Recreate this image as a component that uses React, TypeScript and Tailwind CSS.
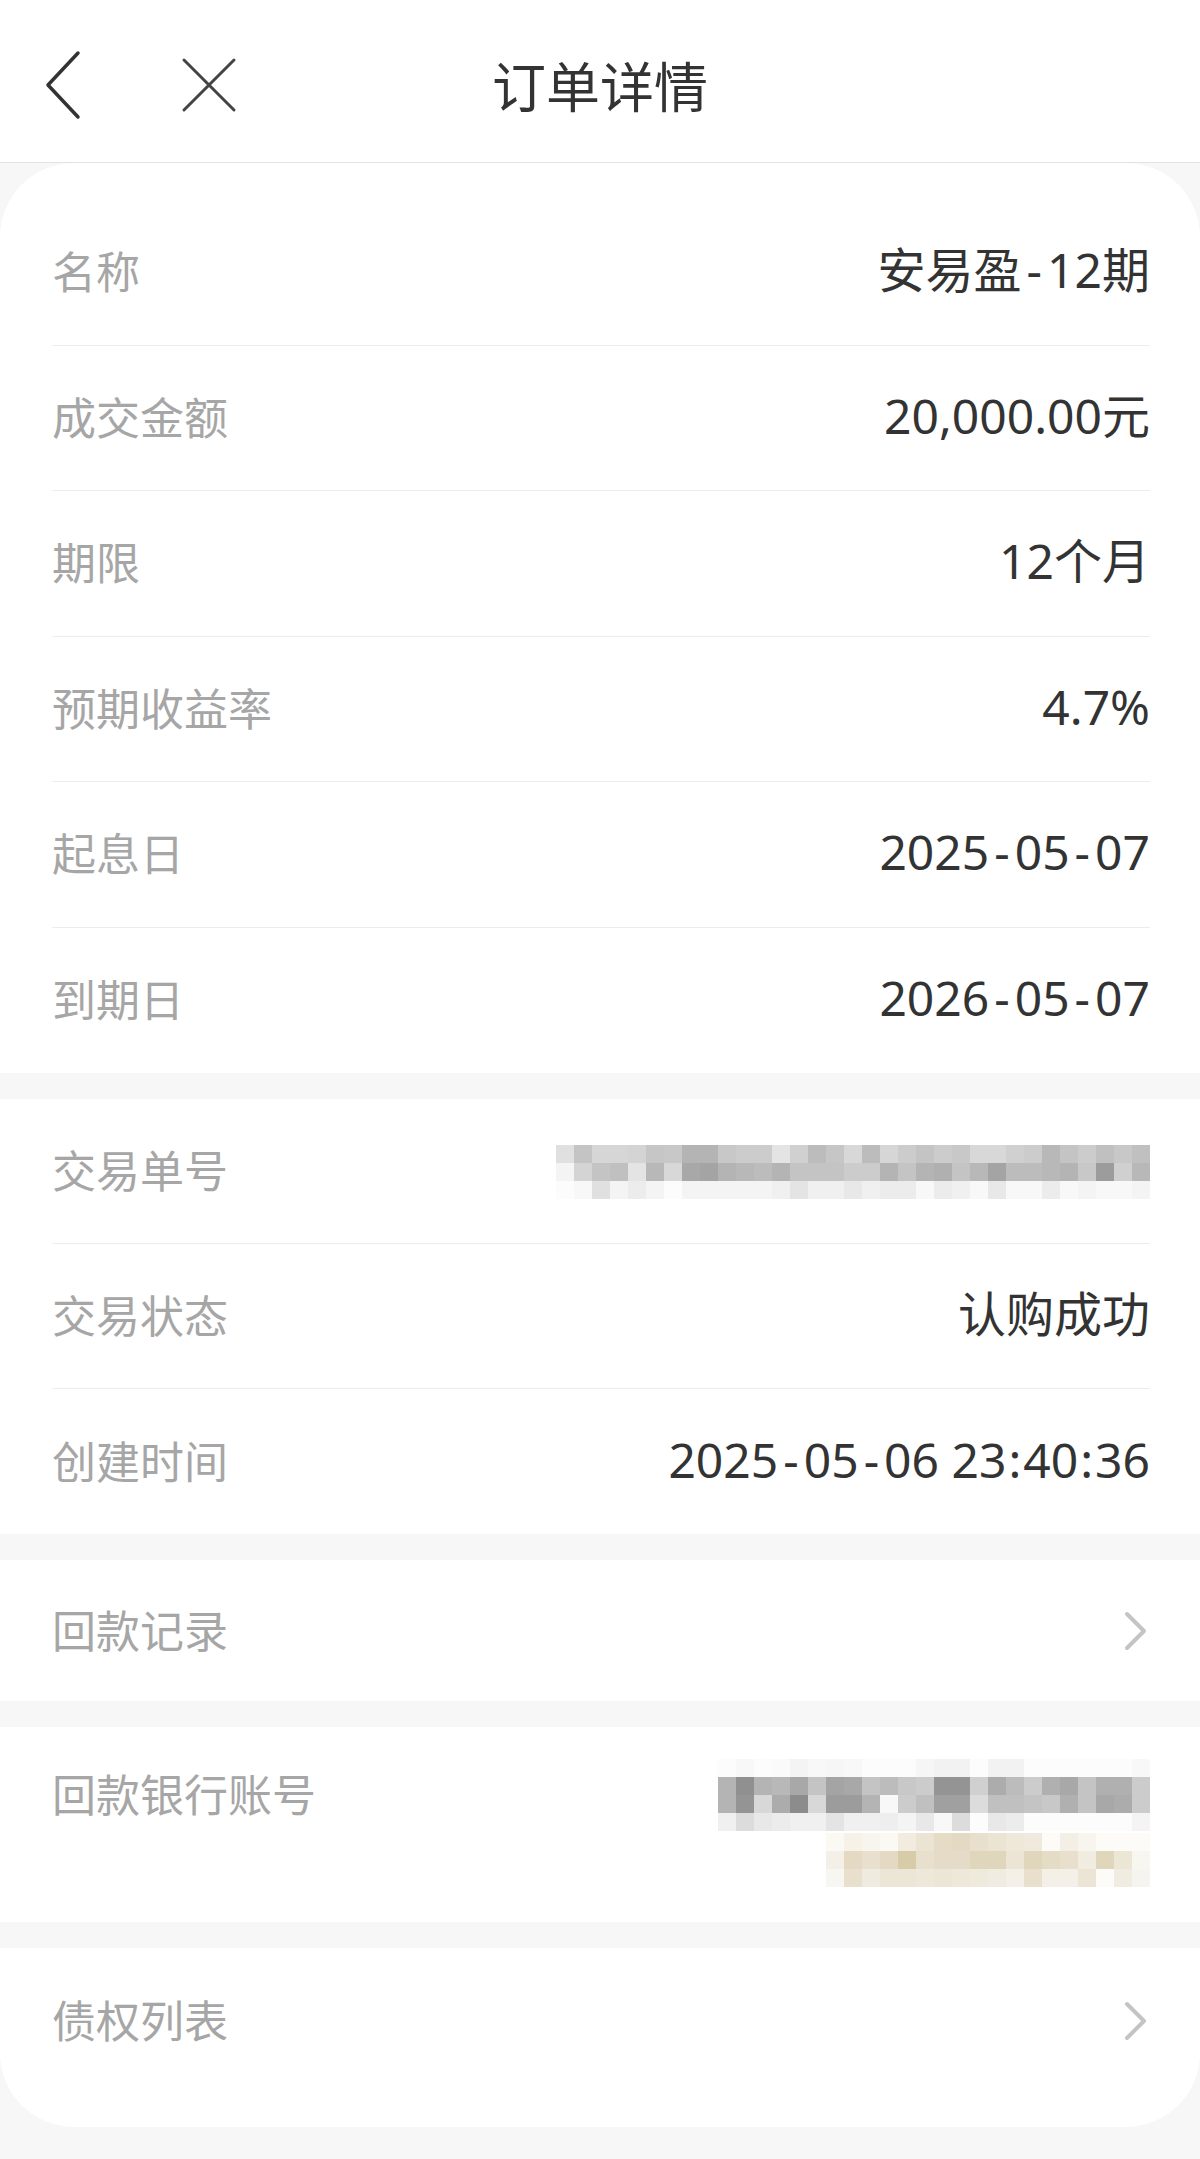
import React from "react";

const txRows: string[][] = [
  "e0,c4,d6,d6,d4,c6,c8,b4,b4,c8,cc,cc,e4,d0,bc,c6,d8,bc,d6,cc,c4,cc,c8,d8,d8,d0,cc,b8,c4,cc,c0,c8,c0".split(","),
  "f4,d4,c4,c0,e4,b8,d8,a8,a4,b4,b8,bc,b4,c4,c4,c4,cc,cc,b4,c4,b4,b0,c4,b8,a4,bc,bc,b8,b4,c8,9c,d0,b8".split(","),
  "fc,f8,e0,f4,ec,f4,fc,f4,f4,f4,f4,f4,f0,e4,f0,f0,e8,f0,ec,ec,f8,ec,f0,f8,e8,f8,f8,ec,f8,f4,f8,f8,f4".split(","),
];

const bankRows: string[][] = [
  "fc,f8,fc,fa,f4,f8,f6,f8,fc,fc,fc,f6,f2,f2,fc,f2,f2,fc,fc,fc,fc,fc,fc,f8".split(","),
  "b4,90,b4,b8,a8,c4,a4,a8,c4,bc,c8,cc,94,94,d0,ac,bc,cc,b0,a8,c4,b0,b0,cc".split(","),
  "b4,94,d8,ac,8c,d8,9c,9c,b4,f8,cc,c0,a0,a0,dc,c0,c0,c4,c8,b0,c4,a8,ac,cc".split(","),
  "f0,dc,e8,ec,f0,f0,e4,f0,f0,ee,f4,e8,f8,dc,fc,e8,ec,fc,fc,fc,fc,fc,fc,f4".split(","),
];

const goldRows: string[][] = [
  "#fbf9f4,#f6f2e8,#f8f5ee,#fbf9f4,#f2ece0,#ece4d2,#e6dcc6,#e4dac4,#e8e0cc,#ebe4d2,#eee8d8,#f0eade,#fcfbf8,#f4efe4,#f8f5ee,#fcfbf8,#fcfbf8,#fcfbf8".split(","),
  "#f4f0e8,#e4dac4,#e8e0cc,#e4dac4,#d8cca8,#e8e0cc,#e4dcc8,#e4dcc8,#e0d6bc,#e0d6bc,#ece4d4,#e0d6bc,#e4dcc4,#e8e0cc,#f0ece0,#e0d6bc,#ece6d4,#f8f6f0".split(","),
  "#f8f6f0,#e8e0cc,#f0ebe0,#ece6d6,#ece6d6,#eee8da,#ece6d6,#eee8da,#eeeadc,#f0ece2,#f4f0e8,#e8e0cc,#f4f0e8,#f4f0e8,#ece4d4,#fcfbf8,#f0ece2,#f6f4ee".split(","),
];

function Mosaic({ rows, cell, gray }: { rows: string[][]; cell: number; gray: boolean }) {
  return (
    <div className="flex flex-col">
      {rows.map((r, i) => (
        <div key={i} className="flex">
          {r.map((c, j) => (
            <div
              key={j}
              style={{
                width: cell,
                height: cell,
                backgroundColor: gray ? `#${c}${c}${c}` : c,
              }}
            />
          ))}
        </div>
      ))}
    </div>
  );
}

function H() {
  return <span className="mx-[5px]">-</span>;
}
function C() {
  return <span className="mx-[2px]">:</span>;
}

function Row({
  label,
  value,
  last,
  h = "h-[145px]",
}: {
  label: string;
  value: React.ReactNode;
  last?: boolean;
  h?: string;
}) {
  return (
    <div className={`ml-[52px] mr-[50px] ${h} flex items-center justify-between ${last ? "" : "border-b border-[#ededed]"}`}>
      <span className="text-[44px] text-[#a6a6a6] leading-none">{label}</span>
      <span className="text-[48px] text-[#333333] leading-none -mt-[4px]">{value}</span>
    </div>
  );
}

function Chevron() {
  return (
    <svg width="28" height="40" viewBox="0 0 28 40" fill="none">
      <path d="M5 3 L22 20 L5 37" stroke="#c4c4c4" strokeWidth="4" strokeLinecap="round" strokeLinejoin="round" />
    </svg>
  );
}

function Gap() {
  return <div className="h-[26px] bg-[#f7f7f7]" />;
}

export default function App() {
  return (
    <div
      className="w-[1200px] h-[2159px] bg-[#f7f7f7] overflow-hidden"
      style={{ fontFamily: '"Noto Sans", "Noto Sans CJK SC", sans-serif' }}
    >
      {/* Header */}
      <div className="relative h-[163px] bg-white border-b border-[#e3e3e3] flex items-center justify-center">
        <div className="absolute left-[40px] top-[48px]">
          <svg width="46" height="74" viewBox="0 0 46 74" fill="none">
            <path d="M38 5 L8 37 L38 69" stroke="#333333" strokeWidth="3.5" strokeLinecap="round" strokeLinejoin="round" />
          </svg>
        </div>
        <div className="absolute left-[180px] top-[56px]">
          <svg width="58" height="58" viewBox="0 0 58 58" fill="none">
            <path d="M4 4 L54 54 M54 4 L4 54" stroke="#444444" strokeWidth="3" strokeLinecap="round" />
          </svg>
        </div>
        <span className="text-[54px] text-[#333333] leading-none mt-[8px]" style={{ fontFamily: '"Noto Sans CJK SC", sans-serif' }}>
          订单详情
        </span>
      </div>

      {/* Card */}
      <div className="bg-white rounded-[74px] overflow-hidden h-[1964px]">
        <div className="pt-[37px]">
          <Row h="h-[145.5px]" label="名称" value={<>安易盈<H />12期</>} />
          <Row h="h-[145.5px]" label="成交金额" value="20,000.00元" />
          <Row h="h-[145.5px]" label="期限" value="12个月" />
          <Row h="h-[145.5px]" label="预期收益率" value="4.7%" />
          <Row h="h-[145.5px]" label="起息日" value={<>2025<H />05<H />07</>} />
          <Row h="h-[145.5px]" label="到期日" value={<>2026<H />05<H />07</>} last />
        </div>
        <Gap />
        <div>
          <Row
            label="交易单号"
            value={
              <div className="mt-[6px]">
                <Mosaic rows={txRows} cell={18} gray />
              </div>
            }
          />
          <Row label="交易状态" value="认购成功" />
          <Row label="创建时间" value={<>2025<H />05<H />06 23<C />40<C />36</>} last />
        </div>
        <Gap />
        <div className="h-[141px] ml-[52px] mr-[50px] flex items-center justify-between">
          <span className="text-[44px] text-[#a6a6a6] leading-none">回款记录</span>
          <Chevron />
        </div>
        <Gap />
        <div className="h-[195px] ml-[52px] mr-[50px] flex justify-between">
          <span className="text-[44px] text-[#a6a6a6] leading-none mt-[46px]">回款银行账号</span>
          <div className="flex flex-col items-end mt-[32px] gap-[2px]">
            <Mosaic rows={bankRows} cell={18} gray />
            <Mosaic rows={goldRows} cell={18} gray={false} />
          </div>
        </div>
        <Gap />
        <div className="h-[145px] ml-[52px] mr-[50px] flex items-center justify-between">
          <span className="text-[44px] text-[#a6a6a6] leading-none">债权列表</span>
          <Chevron />
        </div>
      </div>
    </div>
  );
}
